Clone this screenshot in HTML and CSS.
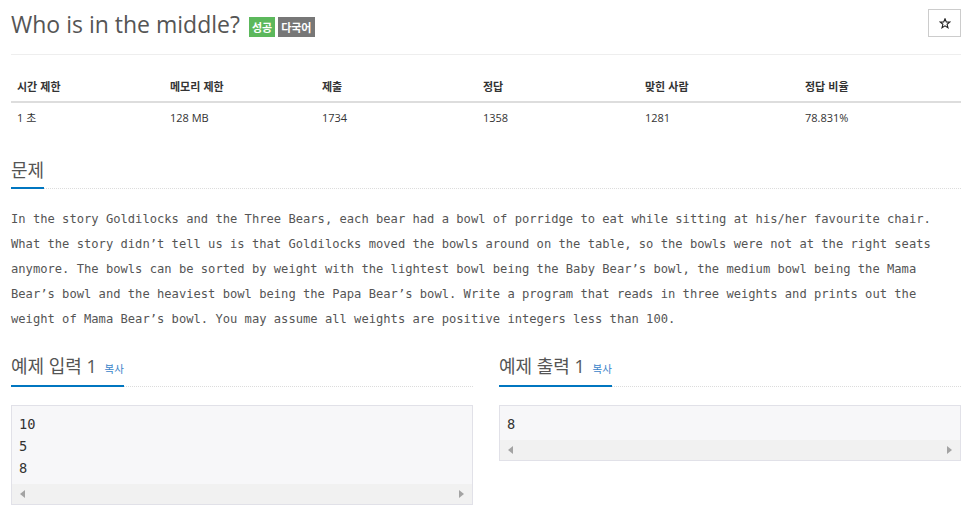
FILE: index.html
```html
<!DOCTYPE html>
<html lang="ko">
<head>
<meta charset="utf-8">
<title>Who is in the middle?</title>
<link rel="stylesheet" href="styles.css">
</head>
<body>
<div class="page">
  <div class="page-header">
    <div class="title-wrap">
      <h1 class="title">Who is in the middle?</h1>
      <span class="label label-success">성공</span>
      <span class="label label-default">다국어</span>
    </div>
    <button class="star-btn" type="button" aria-label="즐겨찾기">
      <svg width="12" height="11" viewBox="0 0 12 11" aria-hidden="true">
        <path d="M6 0.8 L7.3 4 L10.8 4.1 L8.1 6.3 L9 9.8 L6 7.9 L3 9.8 L3.9 6.3 L1.2 4.1 L4.7 4 Z" fill="none" stroke="#222" stroke-width="1.1" stroke-linejoin="miter"/>
      </svg>
    </button>
  </div>

  <table class="info-table">
    <thead>
      <tr>
        <th class="c1">시간 제한</th>
        <th class="c2">메모리 제한</th>
        <th class="c3">제출</th>
        <th class="c4">정답</th>
        <th class="c5">맞힌 사람</th>
        <th class="c6">정답 비율</th>
      </tr>
    </thead>
    <tbody>
      <tr>
        <td>1 초</td>
        <td>128 MB</td>
        <td>1734</td>
        <td>1358</td>
        <td>1281</td>
        <td>78.831%</td>
      </tr>
    </tbody>
  </table>

  <section class="problem">
    <div class="headline"><h2>문제</h2></div>
    <p class="problem-text">In the story Goldilocks and the Three Bears, each bear had a bowl of porridge to eat while sitting at his/her favourite chair. What the story didn’t tell us is that Goldilocks moved the bowls around on the table, so the bowls were not at the right seats anymore. The bowls can be sorted by weight with the lightest bowl being the Baby Bear’s bowl, the medium bowl being the Mama Bear’s bowl and the heaviest bowl being the Papa Bear’s bowl. Write a program that reads in three weights and prints out the weight of Mama Bear’s bowl. You may assume all weights are positive integers less than 100.</p>
  </section>

  <div class="samples">
    <section class="sample">
      <div class="headline"><h2>예제 입력 1 <a class="copy" href="#">복사</a></h2></div>
      <div class="sample-box">
        <pre class="sample-data">10
5
8</pre>
        <div class="hscroll"><span class="arrow arrow-left"></span><span class="arrow arrow-right"></span></div>
      </div>
    </section>
    <section class="sample">
      <div class="headline"><h2>예제 출력 1 <a class="copy" href="#">복사</a></h2></div>
      <div class="sample-box">
        <pre class="sample-data">8</pre>
        <div class="hscroll"><span class="arrow arrow-left"></span><span class="arrow arrow-right"></span></div>
      </div>
    </section>
  </div>
</div>
</body>
</html>
```
FILE: styles.css
```css
* { box-sizing: border-box; }

body {
  margin: 0;
  background: #fff;
  font-family: "Open Sans", "Noto Sans CJK KR", sans-serif;
  color: #333;
}

.page {
  width: 972px;
  padding: 0 11px;
}

.page-header {
  display: flex;
  justify-content: space-between;
  align-items: flex-start;
  padding-top: 7px;
  padding-bottom: 13px;
  border-bottom: 1px solid #eee;
}

.title-wrap {
  display: flex;
  align-items: center;
}

.title {
  margin: 0;
  font-size: 23px;
  line-height: 34px;
  font-weight: 400;
  color: #555;
}

.label {
  display: inline-block;
  margin-left: 3px;
  margin-top: 5px;
  padding: 3px 3px;
  font-family: "Noto Sans CJK KR", sans-serif;
  font-size: 11px;
  line-height: 14px;
  font-weight: 700;
  color: #fff;
}
.label-success { background: #5cb85c; margin-left: 9px; }
.label-default { background: #777; }

.star-btn {
  display: flex;
  align-items: center;
  justify-content: center;
  margin-top: 2px;
  width: 33px;
  height: 28px;
  padding: 0;
  border: 1px solid #ccc;
  background: #fff;
}

.info-table {
  width: 950px;
  margin-top: 17px;
  border-collapse: collapse;
  table-layout: fixed;
  font-size: 11px;
  line-height: 17px;
}
.info-table th,
.info-table td {
  text-align: left;
  padding: 6px;
}
.info-table th {
  font-family: "Noto Sans CJK KR", sans-serif;
  font-weight: 700;
  color: #333;
  border-bottom: 2px solid #ddd;
}
.info-table td { color: #333; }
.c1 { width: 153px; }
.c2 { width: 152px; }
.c3 { width: 161px; }
.c4 { width: 162px; }
.c5 { width: 160px; }
.c6 { width: 162px; }

.problem { margin-top: 26px; }

.headline {
  border-bottom: 1px dotted #dcdcdc;
}
.headline h2 {
  display: inline-block;
  margin: 0 0 -1px;
  padding-bottom: 4px;
  border-bottom: 2px solid #0076c0;
  font-size: 18px;
  line-height: 25px;
  font-weight: 400;
  color: #555;
}

.copy {
  font-family: "Noto Sans CJK KR", sans-serif;
  font-size: 10.5px;
  color: #3a84c9;
  text-decoration: none;
  margin-left: 3px;
}

.problem-text {
  margin: 18px 0 0;
  font-family: "DejaVu Sans Mono", monospace;
  font-size: 12.14px;
  line-height: 25px;
  color: #555;
}

.samples {
  display: grid;
  grid-template-columns: 1fr 1fr;
  column-gap: 26px;
  margin-top: 22px;
  align-items: start;
}

.sample-box {
  margin-top: 18px;
  border: 1px solid #e1e1e8;
  background: #f7f7f9;
}

.sample-data {
  margin: 0;
  padding: 7px 7px 5px;
  font-family: "DejaVu Sans Mono", monospace;
  font-size: 13.7px;
  line-height: 22px;
  color: #333;
}

.hscroll {
  display: flex;
  justify-content: space-between;
  align-items: center;
  height: 20px;
  padding: 0 8px 0 8px;
  background: #f1f1f1;
}

.arrow {
  width: 0;
  height: 0;
  border-top: 4px solid transparent;
  border-bottom: 4px solid transparent;
}
.arrow-left { border-right: 5px solid #a3a3a3; }
.arrow-right { border-left: 5px solid #a3a3a3; }
```
